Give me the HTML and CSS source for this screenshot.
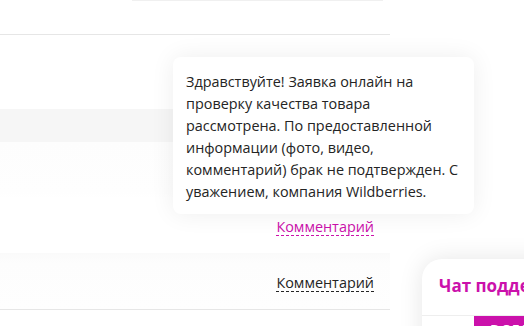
FILE: index.html
```html
<!DOCTYPE html>
<html lang="ru">
<head>
<meta charset="utf-8">
<link rel="stylesheet" href="styles.css">
</head>
<body>
<div class="page">
  <div class="list">
    <div class="top-edge"></div>
    <div class="row row-head"></div>
    <div class="row row-blank"></div>
    <div class="row row-gray"></div>
    <div class="row row-comment row-soft">
      <span class="comment comment-active">Комментарий</span>
    </div>
    <div class="row row-comment row-hover">
      <span class="comment">Комментарий</span>
    </div>
  </div>

  <div class="tooltip">Здравствуйте! Заявка онлайн на<br>проверку качества товара<br>рассмотрена. По предоставленной<br>информации (фото, видео,<br>комментарий) брак не подтвержден. С<br>уважением, компания Wildberries.</div>

  <div class="chat">
    <div class="chat-head">Чат поддержки</div>
    <div class="chat-tabs">
      <div class="chat-tab-spacer"></div>
      <div class="chat-tab">ВСЕЙ</div>
    </div>
  </div>
</div>
</body>
</html>
```

FILE: styles.css
```css
* { box-sizing: border-box; }
html, body {
  margin: 0;
  padding: 0;
  background: #fff;
  overflow: hidden;
}
body {
  font-family: "Open Sans", "Noto Sans", sans-serif;
  color: #242424;
  width: 524px;
  height: 326px;
}
.page {
  position: relative;
  width: 524px;
  height: 326px;
  overflow: hidden;
}
.list {
  width: 390px;
  display: flex;
  flex-direction: column;
}
.top-edge {
  height: 1px;
  margin-left: 132px;
  width: 251px;
  background: #f0f0f0;
}
.row-head {
  height: 34px;
  border-bottom: 1px solid #e6e6e6;
}
.row-blank {
  height: 74px;
}
.row-gray {
  height: 33px;
  background: #f6f6f6;
}
.row-comment {
  display: flex;
  justify-content: flex-end;
  align-items: flex-end;
  padding-right: 16px;
}
.row-soft {
  height: 111px;
  padding-bottom: 17px;
  background: linear-gradient(#fdfdfd 0, #fefefe 50px, #fff 56px);
}
.row-hover {
  height: 57px;
  padding-bottom: 17px;
  border-bottom: 1px solid #e6e6e6;
  background: linear-gradient(#fafafa 0, #fdfdfd 10px, #fefefe 100%);
}
.comment {
  font-size: 14.4px;
  line-height: 17px;
  border-bottom: 1px dashed #242424;
  color: #242424;
}
.comment-active {
  color: #cb11ab;
  border-bottom-color: #cb11ab;
}
.tooltip {
  position: absolute;
  left: 173px;
  top: 57px;
  width: 301px;
  height: 157px;
  padding: 14px 13px 11px 13px;
  background: #fff;
  border-radius: 8px;
  box-shadow: 0 0 24px rgba(0, 0, 0, 0.07);
  font-size: 14.4px;
  line-height: 22px;
  color: #242424;
  white-space: nowrap;
}
.chat {
  position: absolute;
  left: 422px;
  top: 259px;
  width: 140px;
  height: 120px;
  background: #fff;
  border-radius: 20px 0 0 0;
  box-shadow: 0 0 24px rgba(0, 0, 0, 0.1);
}
.chat-head {
  height: 57px;
  padding: 15px 0 0 17px;
  border-bottom: 1px solid #eeeeee;
  font-size: 17px;
  font-weight: 700;
  color: #cb11ab;
  white-space: nowrap;
}
.chat-tabs {
  display: flex;
  height: 40px;
}
.chat-tab-spacer {
  width: 52px;
}
.chat-tab {
  flex: 1;
  background: #cb11ab;
  color: #fff;
  font-size: 14px;
  letter-spacing: 2px;
  padding: 4px 0 0 16px;
}
```
